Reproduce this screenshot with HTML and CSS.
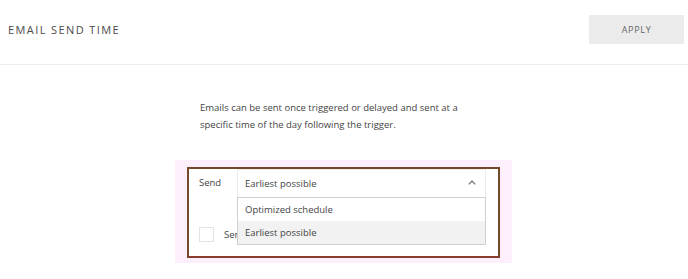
FILE: index.html
```html
<!DOCTYPE html>
<html>
<head>
<meta charset="utf-8">
<link rel="stylesheet" href="styles.css">
</head>
<body>
<header class="header">
  <h1 class="title">EMAIL SEND TIME</h1>
  <button class="apply">APPLY</button>
</header>
<p class="desc">Emails can be sent once triggered or delayed and sent at a specific time of the day following the trigger.</p>
<div class="highlight">
  <div class="frame">
    <div class="row">
      <span class="label">Send</span>
      <div class="select">
        <span class="value">Earliest possible</span>
        <svg class="chev" width="8" height="5" viewBox="0 0 8 5"><path d="M0.8 4.3 L4 1 L7.2 4.3" fill="none" stroke="#666" stroke-width="1.1"/></svg>
        <ul class="menu">
          <li class="opt">Optimized schedule</li>
          <li class="opt sel">Earliest possible</li>
        </ul>
      </div>
    </div>
    <div class="row2">
      <span class="check"></span>
      <span class="label2">Send at a specific time</span>
    </div>
  </div>
</div>
</body>
</html>
```
FILE: styles.css
```css
* { box-sizing: border-box; }
body {
  margin: 0;
  background: #fff;
  font-family: "Open Sans", "Noto Sans", sans-serif;
  color: #444;
  overflow: hidden;
}
.header {
  height: 65px;
  display: flex;
  justify-content: space-between;
  align-items: flex-start;
  padding: 15px 4px 0 8px;
  border-bottom: 1px solid #ececec;
}
.title {
  margin: 0;
  font-size: 11px;
  font-weight: 400;
  letter-spacing: 1.4px;
  line-height: 29px;
  color: #4a4a4a;
}
.apply {
  width: 95px;
  height: 29px;
  border: none;
  background: #ebebeb;
  font-family: "Open Sans", sans-serif;
  font-size: 9px;
  letter-spacing: 0.7px;
  color: #666;
  padding: 0;
}
.desc {
  margin: 34px 0 0 200px;
  width: 265px;
  font-size: 9.5px;
  line-height: 17px;
  color: #444;
}
.highlight {
  margin: 27px 0 0 175px;
  width: 337px;
  height: 103px;
  background: #fdeffb;
  padding: 7px 12px 5px 12px;
}
.frame {
  height: 91px;
  border: 2px solid #74482a;
  border-bottom-color: #8a3d2c;
  background: #fff;
  padding: 0 10px 0 10px;
}
.row {
  display: flex;
  align-items: flex-start;
}
.label {
  width: 38px;
  font-size: 9.5px;
  line-height: 28px;
  color: #444;
}
.select {
  position: relative;
  width: 249px;
  height: 28px;
  border: 1px solid #ececec;
  border-bottom: none;
  display: flex;
  align-items: center;
  justify-content: space-between;
  padding: 0 9px 0 7px;
}
.value {
  font-size: 9.5px;
  color: #444;
}
.chev { margin-top: -2px; }
.menu {
  position: absolute;
  left: -1px;
  top: 27px;
  width: 249px;
  margin: 0;
  padding: 0;
  list-style: none;
  border: 1px solid #cfcfcf;
  background: #fff;
  z-index: 2;
}
.opt {
  height: 23px;
  line-height: 23px;
  padding-left: 7px;
  font-size: 9.5px;
  color: #444;
}
.sel { background: #f2f2f2; }
.row2 {
  display: flex;
  align-items: center;
  margin-top: 30px;
}
.check {
  width: 15px;
  height: 15px;
  border: 1px solid #e3e3e3;
}
.label2 {
  margin-left: 10px;
  font-size: 9.5px;
  color: #444;
  white-space: nowrap;
}
```
